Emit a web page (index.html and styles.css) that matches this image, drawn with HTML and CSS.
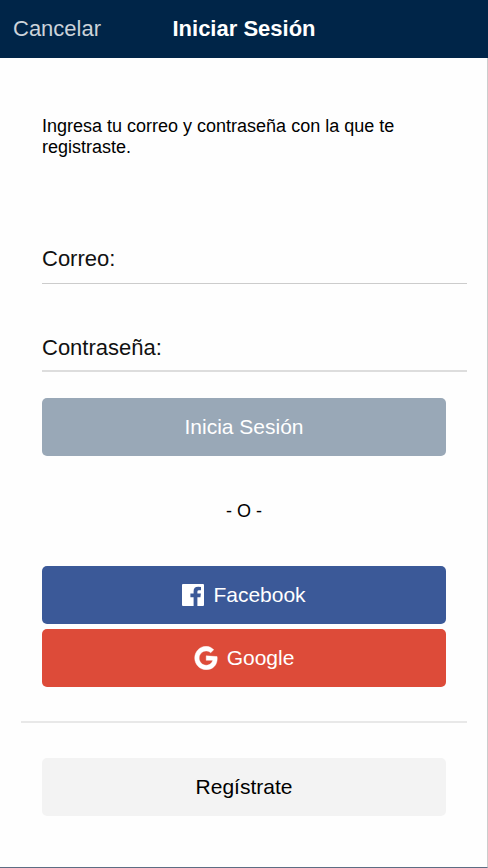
FILE: index.html
```html
<!DOCTYPE html>
<html lang="es">
<head>
  <meta charset="utf-8">
  <meta name="viewport" content="width=device-width, initial-scale=1">
  <title>Iniciar Sesión</title>
  <link rel="stylesheet" href="styles.css">
</head>
<body>
  <header class="navbar">
    <button type="button" class="cancel">Cancelar</button>
    <h1 class="title">Iniciar Sesión</h1>
  </header>
  <main class="content">
    <p class="intro">Ingresa tu correo y contraseña con la que te registraste.</p>
    <form class="login">
      <div class="field">
        <label for="email">Correo:</label>
        <input id="email" type="email">
      </div>
      <div class="field field-password">
        <label for="password">Contraseña:</label>
        <input id="password" type="password">
      </div>
      <button type="submit" class="button button-login">Inicia Sesión</button>
    </form>
    <p class="or">- O -</p>
    <div class="social">
      <button type="button" class="button button-facebook">
        <svg class="icon-facebook" viewBox="0 0 22 22" aria-hidden="true">
          <path fill="currentColor" d="M1 0H21Q22 0 22 1V21Q22 22 21 22H15.4V13.2H18.4L18.9 9.6H15.4V7.6Q15.4 6.2 17 6.2H19V3Q17.9 2.8 16.2 2.8Q11.6 2.8 11.6 7.2V9.6H8.4V13.2H11.6V22H1Q0 22 0 21V1Q0 0 1 0Z"/>
        </svg>
        <span>Facebook</span>
      </button>
      <button type="button" class="button button-google">
        <svg class="icon-google" viewBox="0 0 24 24" aria-hidden="true">
          <path fill="currentColor" stroke="currentColor" stroke-width=".4" d="M12.24 9.82v4.63h6.55c-.27 1.7-1.98 4.98-6.55 4.98-3.94 0-7.16-3.26-7.16-7.29s3.22-7.29 7.16-7.29c2.24 0 3.74.96 4.6 1.78l3.13-3.02C17.96 1.73 15.35 0 12.24 0 5.87 0 .5 5.37.5 12s5.15 12 11.74 12c6.78 0 11.28-4.77 11.28-11.48 0-.77-.08-1.36-.18-1.95z" transform="translate(.2 .2) scale(.98)"/>
        </svg>
        <span>Google</span>
      </button>
    </div>
    <hr class="divider">
    <button type="button" class="button button-register">Regístrate</button>
  </main>
</body>
</html>
```
FILE: styles.css
```css
* {
  box-sizing: border-box;
}

body {
  display: flex;
  flex-direction: column;
  min-height: 100vh;
  margin: 0;
  background: #fefefe;
  color: #111;
  font-family: "Liberation Sans", Arial, sans-serif;
}

button,
input {
  border: 0;
  font-family: inherit;
}

.navbar {
  display: grid;
  grid-template-columns: 1fr auto 1fr;
  align-items: center;
  height: 58px;
  padding: 0 13px;
  background: #002548;
}

.cancel {
  justify-self: start;
  padding: 0;
  background: none;
  color: #ccd3da;
  font-size: 22px;
}

.title {
  margin: 0;
  color: #fff;
  font-size: 22px;
}

.content {
  display: flex;
  flex: 1;
  flex-direction: column;
  padding: 58px 41px 48px 42px;
  border-right: 1px solid #ccc;
  border-bottom: 1px solid #5d6d83;
}

.intro {
  margin: 0 0 78px;
  color: #000;
  font-size: 18px;
  line-height: 21px;
}

.login {
  display: flex;
  flex-direction: column;
}

.field {
  display: flex;
  align-items: center;
  height: 48px;
  margin: 0 -21px 42px 0;
  padding-bottom: 2px;
  border-bottom: 1px solid #ccc;
  font-size: 22px;
}

.field-password {
  height: 46px;
  margin-bottom: 26px;
  padding-bottom: 0;
  border-bottom: 2px solid #ddd;
}

.field input {
  flex: 1;
  min-width: 0;
  padding: 0 8px;
  background: none;
  font-size: 22px;
  outline: 0;
}

.button {
  display: flex;
  align-items: center;
  justify-content: center;
  width: 100%;
  height: 58px;
  padding: 0;
  border-radius: 5px;
  color: #fff;
  font-size: 21px;
}

.button-login {
  background: #99a8b7;
}

.or {
  margin: 44px 0;
  color: #000;
  font-size: 18px;
  line-height: 22px;
  text-align: center;
}

.social {
  display: flex;
  flex-direction: column;
  gap: 5px;
}

.button-facebook {
  gap: 9px;
  background: #3b5998;
}

.button-google {
  gap: 9px;
  background: #dd4b39;
}

.icon-facebook {
  width: 22px;
  height: 22px;
}

.icon-google {
  width: 24px;
  height: 24px;
}

.divider {
  align-self: stretch;
  height: 2px;
  margin: 34px -21px 35px;
  border: 0;
  background: #e8e8e8;
}

.button-register {
  background: #f3f3f3;
  color: #000;
}
```
